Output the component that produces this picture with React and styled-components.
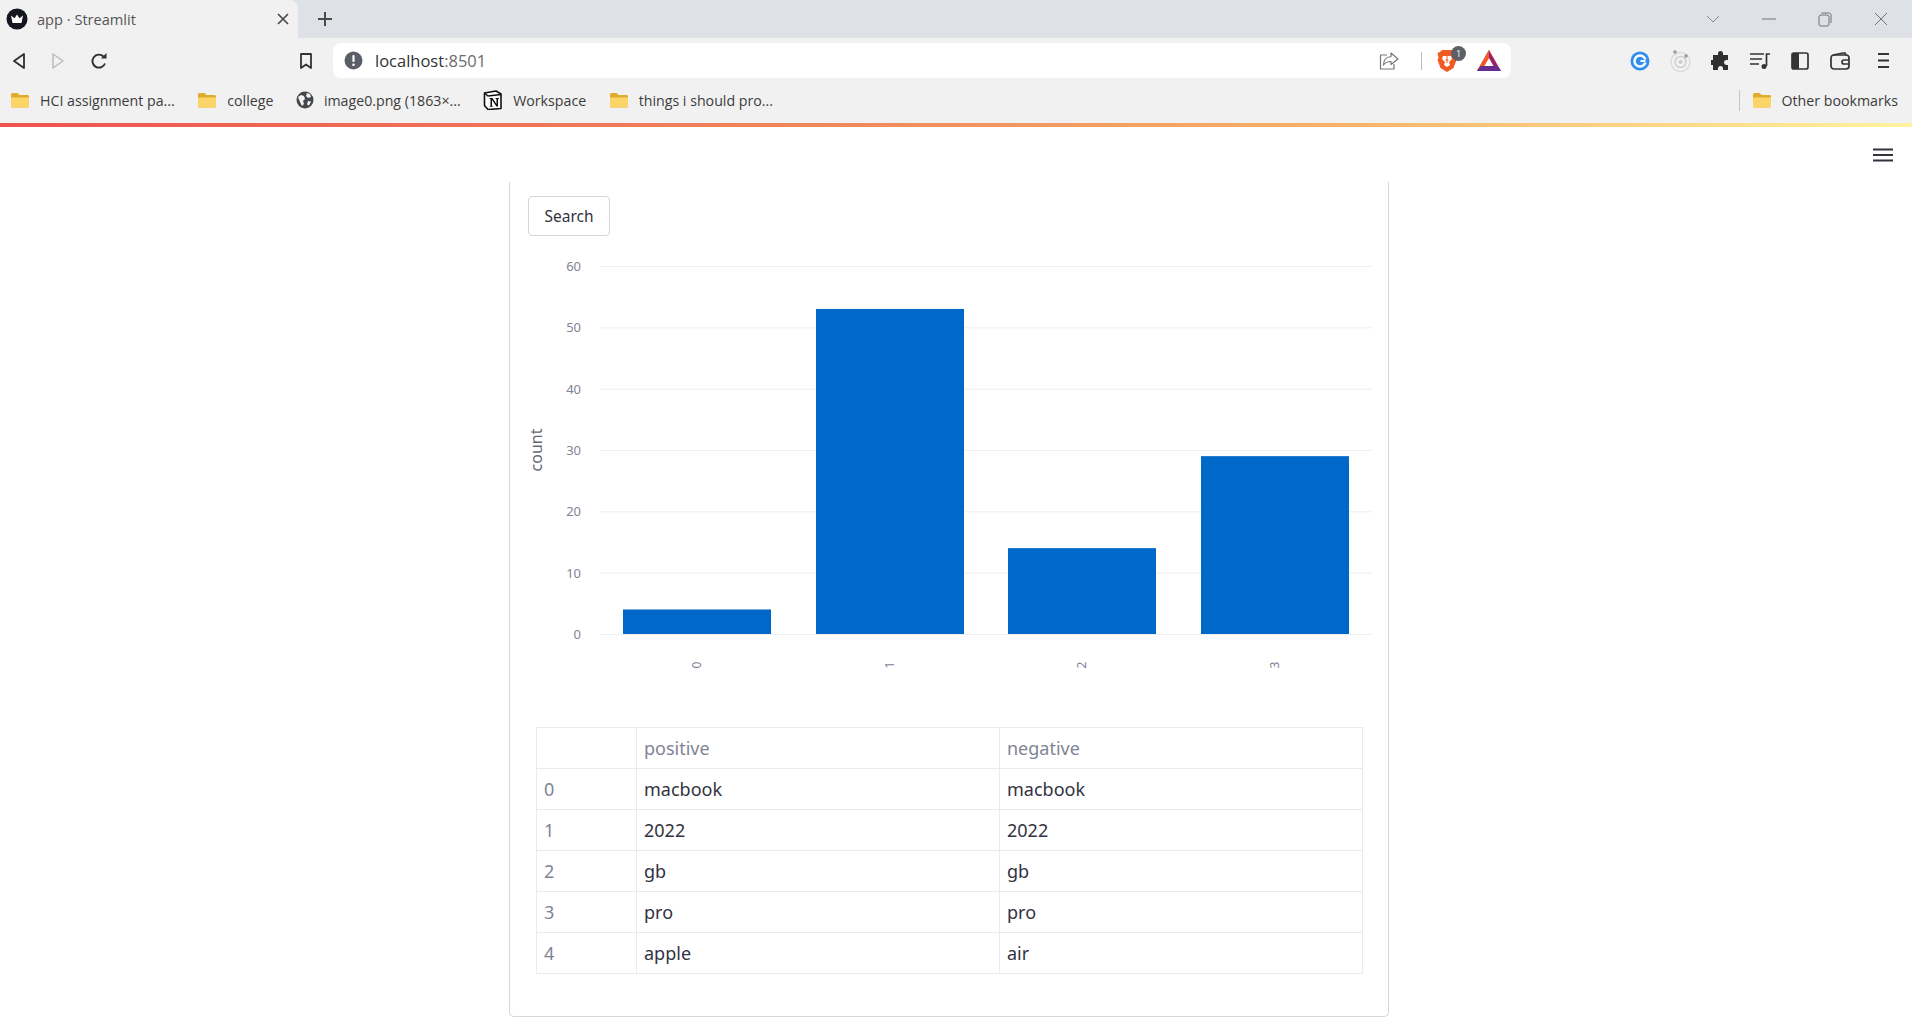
import React from "react";
import styled, { createGlobalStyle } from "styled-components";

const GlobalStyle = createGlobalStyle`
  html, body { margin: 0; padding: 0; height: 100%; overflow: hidden; background: #fff; }
  #root { height: 100%; }
  * { box-sizing: border-box; }
`;

const uiFont = `"Open Sans", "Liberation Sans", sans-serif`;
const pageFont = `"Noto Sans", "Open Sans", sans-serif`;

const Shell = styled.div`
  display: flex;
  flex-direction: column;
  height: 1017px;
  font-family: ${uiFont};
`;

/* ---------- browser chrome ---------- */
const TabStrip = styled.div`
  display: flex;
  align-items: flex-end;
  height: 38px;
  background: #dee1e6;
`;
const Tab = styled.div`
  display: flex;
  align-items: center;
  width: 298px;
  height: 38px;
  padding: 0 7px 0 6px;
  gap: 9px;
  background: #f1f1f1;
  border-top-right-radius: 8px;
  color: #555;
  font-size: 14.6px;
`;
const TabTitle = styled.span`
  flex: 1;
`;
const NewTab = styled.div`
  display: flex;
  align-items: center;
  margin: 0 0 0 19px;
  height: 38px;
`;
const WindowControls = styled.div`
  display: flex;
  align-items: center;
  margin-left: auto;
  height: 38px;
  gap: 42px;
  padding-right: 24px;
`;
const Toolbar = styled.div`
  display: flex;
  align-items: center;
  height: 45px;
  padding-left: 12px;
  background: #f1f1f1;
`;
const NavGroup = styled.div`
  display: flex;
  align-items: center;
  gap: 25px;
  width: 287px;
`;
const Bookmark = styled.div`
  display: flex;
  width: 34px;
`;
const AddressBar = styled.div`
  display: flex;
  align-items: center;
  width: 1178px;
  height: 35px;
  padding: 0 10px 0 11px;
  background: #fff;
  border-radius: 8px;
`;
const Url = styled.span`
  flex: 1;
  margin-left: 12px;
  font-size: 16.5px;
  color: #6c6c6c;
  b { font-weight: 400; color: #333; }
`;
const Divider = styled.span`
  width: 1px;
  height: 18px;
  background: #bdbdbd;
  margin: 0 15px 0 22px;
`;
const BadgeWrap = styled.span`
  position: relative;
  display: flex;
  margin-right: 20px;
`;
const Badge = styled.span`
  position: absolute;
  right: -9px;
  top: -3px;
  width: 15px;
  height: 15px;
  border-radius: 50%;
  background: #5c5f66;
  color: #fff;
  font-size: 9px;
  line-height: 15px;
  text-align: center;
`;
const Extensions = styled.div`
  display: flex;
  align-items: center;
  margin-left: 109px;
`;
const ExtSlot = styled.span`
  display: flex;
  justify-content: center;
  width: 40px;
  &:last-child { margin-left: 3px; }
`;
const BookmarksBar = styled.div`
  display: flex;
  align-items: center;
  height: 40px;
  padding: 0 14px 6px 10px;
  background: #f1f1f1;
  color: #3c3c3c;
  font-size: 14.2px;
`;
const BookmarkItem = styled.div`
  display: flex;
  align-items: center;
  gap: 10px;
  margin-right: 22.5px;
  white-space: nowrap;
`;
const OtherBookmarks = styled(BookmarkItem)`
  margin: 0 0 0 auto;
  padding-left: 12px;
  border-left: 1px solid #c4c4c4;
  height: 21px;
`;
const GradientLine = styled.div`
  height: 4px;
  background: linear-gradient(90deg, #ef5350, #f08a5d 45%, #f7b267 70%, #fff3a0);
`;

/* ---------- streamlit page ---------- */
const Page = styled.main`
  position: relative;
  flex: 1;
  display: flex;
  padding-left: 509px;
  background: #fff;
  font-family: ${pageFont};
`;
const MenuButton = styled.button`
  position: absolute;
  top: 21px;
  right: 19px;
  display: flex;
  padding: 0;
  border: 0;
  background: none;
`;
const Card = styled.section`
  width: 880px;
  margin-top: 55px;
  height: 835px;
  padding: 14px 25px 0 26px;
  border: 1px solid #d8d8da;
  border-top: 0;
  border-radius: 0 0 5px 5px;
`;
const SearchButton = styled.button`
  display: block;
  width: 82px;
  height: 40px;
  margin-left: -8px;
  padding: 0;
  background: #fff;
  border: 1px solid #d5d6da;
  border-radius: 4px;
  color: #31333f;
  font-family: ${pageFont};
  font-size: 15.5px;
`;
const ChartSvg = styled.svg`
  display: block;
  margin: 4px 0 0 -25px;
`;
const DataTable = styled.table`
  width: 826px;
  margin-top: 37px;
  border-collapse: collapse;
  table-layout: fixed;
  font-size: 18px;
  color: #31333f;
`;
const Cell = styled.td`
  height: 41px;
  padding: 0 7px;
  border: 1px solid #e6eaf1;
  color: ${(p) => (p.$muted ? "#808495" : "#31333f")};
  font-weight: 400;
  text-align: left;
`;

/* ---------- chart data ---------- */
const counts = [4, 53, 14, 29];
const barLeft = [112, 305, 497, 690];
const ticks = [0, 10, 20, 30, 40, 50, 60];
const valueY = (v) => 394 - v * 6.133;

function Chart() {
  return (
    <ChartSvg width="877" height="450" viewBox="0 0 877 450" fontFamily={pageFont}>
      {ticks.map((t) => (
        <g key={t}>
          <line x1="89" x2="861" y1={valueY(t) + 0.5} y2={valueY(t) + 0.5} stroke="#eceef2" />
          <text x="70" y={valueY(t) + 5} textAnchor="end" fontSize="13" fill="#808495">{t}</text>
        </g>
      ))}
      <text transform="translate(31 210) rotate(-90)" textAnchor="middle" fontSize="16" fill="#666a75">count</text>
      {counts.map((c, i) => (
        <g key={i}>
          <rect x={barLeft[i]} y={valueY(c)} width="148" height={394 - valueY(c)} fill="#0068c9" />
          <text transform={`translate(${barLeft[i] + 78} 425) rotate(-90)`} textAnchor="middle" fontSize="12" fill="#808495">{i}</text>
        </g>
      ))}
    </ChartSvg>
  );
}

/* ---------- icons ---------- */
const Folder = () => (
  <svg width="20" height="18" viewBox="0 0 20 18">
    <path d="M1 3.500C1 2.700 1.700 2 2.500 2h5l2 2h8C18.300 4 19 4.700 19 5.500V15c0 .8-.7 1.500-1.500 1.500h-15C1.700 16.500 1 15.800 1 15z" fill="#e0ac2f" />
    <path d="M1 6.500h18V15c0 .8-.7 1.500-1.500 1.500h-15C1.700 16.500 1 15.800 1 15z" fill="#fbd567" />
  </svg>
);
const Favicon = () => (
  <svg width="22" height="22" viewBox="0 0 22 22">
    <circle cx="11" cy="11" r="10.500" fill="#14171f" />
    <path d="M5 7.500l3.500 2.800L11 6.500l2.500 3.800L17 7.500 15.500 15h-9z" fill="#fff" />
  </svg>
);
const CloseTab = () => (
  <svg width="16" height="16" viewBox="0 0 16 16" stroke="#4a4a4a" strokeWidth="1.700">
    <path d="M3 3l10 10M13 3L3 13" />
  </svg>
);
const Plus = () => (
  <svg width="16" height="16" viewBox="0 0 16 16" stroke="#4a4a4a" strokeWidth="2">
    <path d="M8 1v14M1 8h14" />
  </svg>
);
const Chevron = () => (
  <svg width="14" height="8" viewBox="0 0 14 8" fill="none" stroke="#8a8d92">
    <path d="M1 1l6 6 6-6" />
  </svg>
);
const Minimize = () => (
  <svg width="14" height="2" viewBox="0 0 14 2" stroke="#70747a"><path d="M0 1h14" /></svg>
);
const Restore = () => (
  <svg width="14" height="15" viewBox="0 0 14 15" fill="none" stroke="#70747a">
    <rect x="1" y="3" width="10" height="11" rx="2" />
    <path d="M3.500 1H11c1.200 0 2 .8 2 2v8" />
  </svg>
);
const CloseWindow = () => (
  <svg width="14" height="14" viewBox="0 0 14 14" stroke="#70747a"><path d="M1 1l12 12M13 1L1 13" /></svg>
);
const Back = () => (
  <svg width="14" height="18" viewBox="0 0 14 18" fill="none" stroke="#2f2f2f" strokeWidth="1.800" strokeLinejoin="round">
    <path d="M12 2v14L2 9z" />
  </svg>
);
const Forward = () => (
  <svg width="14" height="18" viewBox="0 0 14 18" fill="none" stroke="#bbb" strokeWidth="1.500" strokeLinejoin="round">
    <path d="M2 2v14l10-7z" />
  </svg>
);
const Reload = () => (
  <svg width="18" height="18" viewBox="0 0 18 18" fill="none">
    <path d="M15 11.500A6.500 6.500 0 1 1 13.500 4.500" stroke="#2f2f2f" strokeWidth="1.900" />
    <path d="M11 6.500h5.500V1z" fill="#2f2f2f" />
  </svg>
);
const BookmarkIcon = () => (
  <svg width="14" height="18" viewBox="0 0 14 18" fill="none" stroke="#333" strokeWidth="1.800">
    <path d="M2 2h10v14l-5-3.500L2 16z" strokeLinejoin="round" />
  </svg>
);
const Alert = () => (
  <svg width="19" height="19" viewBox="0 0 19 19">
    <circle cx="9.500" cy="9.500" r="9" fill="#5b5e66" />
    <rect x="8.400" y="4" width="2.200" height="7" rx="1" fill="#fff" />
    <circle cx="9.500" cy="13.700" r="1.300" fill="#fff" />
  </svg>
);
const Share = () => (
  <svg width="20" height="18" viewBox="0 0 20 18" fill="none" stroke="#777" strokeWidth="1.200" strokeLinejoin="round">
    <path d="M8 3H1.500v14H15v-5" />
    <path d="M12 1l7 6-7 5.500V9.500C8.500 9.500 6 10.500 4.500 13c0-5 3-8 7.500-8.500z" />
  </svg>
);
const Brave = () => (
  <svg width="20" height="23" viewBox="0 0 20 23">
    <path d="M5 1h10l2 2 2.500 1-1 5 1 2-3 8-6.500 4-6.500-4-3-8 1-2-1-5L3 3z" fill="#f15a22" />
    <path d="M6 7h3l1 1 1-1h3l1 3-3 3 1 3-3 2-3-2 1-3-3-3z" fill="#fff" />
    <path d="M8.500 11h3M10 8v6" stroke="#f15a22" />
  </svg>
);
const Bat = () => (
  <svg width="24" height="21" viewBox="0 0 24 21">
    <path d="M12 0l12 21H0z" fill="#9e1f63" />
    <path d="M12 0L0 21h6l6-11z" fill="#f15a22" />
    <path d="M0 21l3.500-5h17L24 21z" fill="#662d91" />
    <path d="M12 8l4.500 8h-9z" fill="#fff" />
  </svg>
);
const Grammar = () => (
  <svg width="20" height="20" viewBox="0 0 20 20">
    <circle cx="10" cy="10" r="9.500" fill="#2f8fef" />
    <circle cx="10" cy="10" r="5.500" fill="none" stroke="#fff" strokeWidth="2.500" />
    <path d="M11 8.500h7v3h-7z" fill="#2f8fef" />
    <path d="M10.500 9h5v2h-5z" fill="#fff" />
  </svg>
);
const Radar = () => (
  <svg width="21" height="24" viewBox="0 0 21 24" fill="none">
    <circle cx="10.500" cy="13" r="9.500" stroke="#dcdcdc" strokeWidth="1.500" />
    <circle cx="10.500" cy="13" r="5.500" stroke="#cfcfcf" strokeWidth="1.500" />
    <circle cx="10.500" cy="13" r="2" fill="#cfcfcf" />
    <circle cx="5" cy="3" r="1.800" fill="#999" />
    <circle cx="16" cy="7" r="1.800" fill="#999" />
  </svg>
);
const Puzzle = () => (
  <svg width="19" height="20" viewBox="0 0 19 20">
    <path d="M7 2.500a2.500 2.500 0 0 1 5 0V4h5v5h-1.500a2.500 2.500 0 0 0 0 5H17v5h-5v-1.500a2.500 2.500 0 0 0-5 0V19H2v-5H.5a2.500 2.500 0 0 1 0-5H2V4h5z" fill="#303030" />
  </svg>
);
const Playlist = () => (
  <svg width="20" height="18" viewBox="0 0 20 18" fill="none" stroke="#333" strokeWidth="1.700">
    <path d="M0 2h14M0 7h12M0 12h9" />
    <path d="M16.500 14V2H20" />
    <circle cx="14" cy="14.500" r="2.500" fill="#333" stroke="none" />
  </svg>
);
const SidePanel = () => (
  <svg width="18" height="18" viewBox="0 0 18 18">
    <rect x="1" y="1" width="16" height="16" rx="2" fill="none" stroke="#333" strokeWidth="1.700" />
    <rect x="1" y="1" width="7" height="16" fill="#333" />
  </svg>
);
const Wallet = () => (
  <svg width="20" height="18" viewBox="0 0 20 18" fill="none" stroke="#333" strokeWidth="1.700">
    <rect x="1" y="3" width="18" height="14" rx="3" />
    <path d="M3 3l10-2h2l1 2M19 8h-5a2 2 0 0 0 0 4h5" />
  </svg>
);
const MenuDots = () => (
  <svg width="13" height="17" viewBox="0 0 13 17" stroke="#333" strokeWidth="1.800">
    <path d="M1 2h11M1 8.500h11M1 15h11" />
  </svg>
);
const Globe = () => (
  <svg width="18" height="18" viewBox="0 0 18 18">
    <circle cx="9" cy="9" r="8.500" fill="#44474c" />
    <path d="M2 6l3-2 3 1 1 3-2 2 1 3-2 2-2-4zM11 2l3 1 1 3-3 1-2-2zM12 10l3 .5-2 4-2-1z" fill="#f1f1f1" />
  </svg>
);
const Notion = () => (
  <svg width="20" height="20" viewBox="0 0 20 20">
    <path d="M1.500 3L13 1l5 3v14.500L5 19.500l-3.500-4z" fill="#fff" stroke="#111" strokeWidth="1.600" strokeLinejoin="round" />
    <path d="M1.500 3L5 6l13-1.500" fill="none" stroke="#111" strokeWidth="1.400" />
    <path d="M7.500 16V9l-1-.3V8h3l4 6V9l-1-.3V8h3.500v.7l-1 .3v7.500h-1.500L9 10v6l1 .3v.5H6.500v-.5z" fill="#111" />
  </svg>
);
const Hamburger = () => (
  <svg width="20" height="14" viewBox="0 0 20 14" stroke="#31333f" strokeWidth="2">
    <path d="M0 1.500h20M0 7h20M0 12.500h20" />
  </svg>
);

const extensionIcons = [Grammar, Radar, Puzzle, Playlist, SidePanel, Wallet, MenuDots];

const rows = [
  ["macbook", "macbook"],
  ["2022", "2022"],
  ["gb", "gb"],
  ["pro", "pro"],
  ["apple", "air"],
];

export default function App() {
  return (
    <Shell>
      <GlobalStyle />
      <TabStrip>
        <Tab>
          <Favicon />
          <TabTitle>app · Streamlit</TabTitle>
          <CloseTab />
        </Tab>
        <NewTab><Plus /></NewTab>
        <WindowControls>
          <Chevron />
          <Minimize />
          <Restore />
          <CloseWindow />
        </WindowControls>
      </TabStrip>
      <Toolbar>
        <NavGroup>
          <Back />
          <Forward />
          <Reload />
        </NavGroup>
        <Bookmark><BookmarkIcon /></Bookmark>
        <AddressBar>
          <Alert />
          <Url><b>localhost</b>:8501</Url>
          <Share />
          <Divider />
          <BadgeWrap><Brave /><Badge>1</Badge></BadgeWrap>
          <Bat />
        </AddressBar>
        <Extensions>
          {extensionIcons.map((Icon, i) => (
            <ExtSlot key={i}><Icon /></ExtSlot>
          ))}
        </Extensions>
      </Toolbar>
      <BookmarksBar>
        <BookmarkItem><Folder />HCI assignment pa...</BookmarkItem>
        <BookmarkItem><Folder />college</BookmarkItem>
        <BookmarkItem><Globe />image0.png (1863×...</BookmarkItem>
        <BookmarkItem><Notion />Workspace</BookmarkItem>
        <BookmarkItem><Folder />things i should pro...</BookmarkItem>
        <OtherBookmarks><Folder />Other bookmarks</OtherBookmarks>
      </BookmarksBar>
      <GradientLine />
      <Page>
        <MenuButton aria-label="menu"><Hamburger /></MenuButton>
        <Card>
          <SearchButton>Search</SearchButton>
          <Chart />
          <DataTable>
            <colgroup>
              <col width="100" />
              <col width="363" />
              <col width="363" />
            </colgroup>
            <thead>
              <tr>
                <Cell as="th" />
                <Cell as="th" $muted>positive</Cell>
                <Cell as="th" $muted>negative</Cell>
              </tr>
            </thead>
            <tbody>
              {rows.map((r, i) => (
                <tr key={i}>
                  <Cell as="th" $muted>{i}</Cell>
                  <Cell>{r[0]}</Cell>
                  <Cell>{r[1]}</Cell>
                </tr>
              ))}
            </tbody>
          </DataTable>
        </Card>
      </Page>
    </Shell>
  );
}
